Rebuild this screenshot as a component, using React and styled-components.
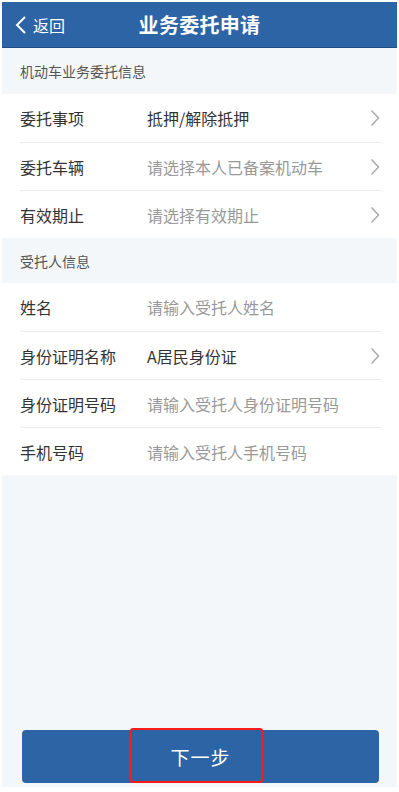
import React from "react";
import styled, { createGlobalStyle } from "styled-components";

const Global = createGlobalStyle`
  html, body { margin: 0; padding: 0; background: #fff; }
  body { font-family: "Noto Sans CJK SC", "Noto Sans", sans-serif; }
  * { box-sizing: border-box; }
`;

const Screen = styled.div`
  margin: 2px 2px 0 2px;
  height: 785px;
  background: #f4f7f9;
  display: flex;
  flex-direction: column;
`;

const Header = styled.div`
  height: 46px;
  background: #2c64a6;
  border-bottom: 1px solid #1f4f86;
  display: grid;
  grid-template-columns: 1fr auto 1fr;
  align-items: center;
  color: #fff;
`;

const Back = styled.div`
  display: flex;
  align-items: center;
  gap: 5px;
  padding-left: 12px;
  font-size: 16px;
`;

const Title = styled.div`
  font-size: 20px;
  font-weight: 700;
  letter-spacing: 0.3px;
`;

const SectionTitle = styled.div`
  height: ${(p) => p.h}px;
  padding-left: 18px;
  display: flex;
  align-items: center;
  font-size: 14px;
  color: #555;
`;

const List = styled.div`
  background: #fff;
  padding: 0 15px 0 18px;
`;

const Row = styled.div`
  height: ${(p) => p.h || 48}px;
  display: flex;
  align-items: center;
  border-top: ${(p) => (p.first ? "none" : "1px solid #ececec")};
`;

const Label = styled.div`
  width: 127px;
  font-size: 16px;
  color: #333;
  flex-shrink: 0;
`;

const Value = styled.div`
  flex: 1;
  font-size: 16px;
  color: ${(p) => (p.placeholder ? "#999" : "#333")};
`;

const Chevron = styled.svg`
  width: 10px;
  height: 18px;
  margin-right: 2px;
`;

const Spacer = styled.div`
  flex: 1;
`;

const Footer = styled.div`
  padding: 0 18px 4px 20px;
`;

const Button = styled.div`
  position: relative;
  height: 53px;
  background: #2c64a6;
  border-radius: 4px;
  display: flex;
  align-items: center;
  justify-content: center;
  color: #fff;
  font-size: 19px;
  letter-spacing: 1px;
`;

const Highlight = styled.div`
  position: absolute;
  left: 108px;
  top: -2px;
  width: 133px;
  height: 55px;
  border: 2px solid #ff1a1a;
  border-radius: 3px;
`;

const Arrow = () => (
  <Chevron viewBox="0 0 10 18">
    <path d="M1.5 1.5 L8.5 9 L1.5 16.5" fill="none" stroke="#aaa" strokeWidth="1.5" />
  </Chevron>
);

const FormRow = ({ label, value, placeholder, arrow, first, h }) => (
  <Row first={first} h={h}>
    <Label>{label}</Label>
    <Value placeholder={placeholder ? 1 : 0}>{value}</Value>
    {arrow && <Arrow />}
  </Row>
);

export default function App() {
  return (
    <>
      <Global />
      <Screen>
        <Header>
          <Back>
            <svg width="14" height="20" viewBox="0 0 14 20">
              <path d="M11 2 L3 10 L11 18" fill="none" stroke="#fff" strokeWidth="2" />
            </svg>
            返回
          </Back>
          <Title>业务委托申请</Title>
          <div />
        </Header>
        <SectionTitle h={46}>机动车业务委托信息</SectionTitle>
        <List>
          <FormRow first label="委托事项" value="抵押/解除抵押" arrow />
          <FormRow label="委托车辆" value="请选择本人已备案机动车" placeholder arrow />
          <FormRow label="有效期止" value="请选择有效期止" placeholder arrow />
        </List>
        <SectionTitle h={45}>受托人信息</SectionTitle>
        <List>
          <FormRow first label="姓名" value="请输入受托人姓名" placeholder />
          <FormRow label="身份证明名称" value="A居民身份证" arrow />
          <FormRow label="身份证明号码" value="请输入受托人身份证明号码" placeholder />
          <FormRow label="手机号码" value="请输入受托人手机号码" placeholder />
        </List>
        <Spacer />
        <Footer>
          <Button>
            下一步
            <Highlight />
          </Button>
        </Footer>
      </Screen>
    </>
  );
}
